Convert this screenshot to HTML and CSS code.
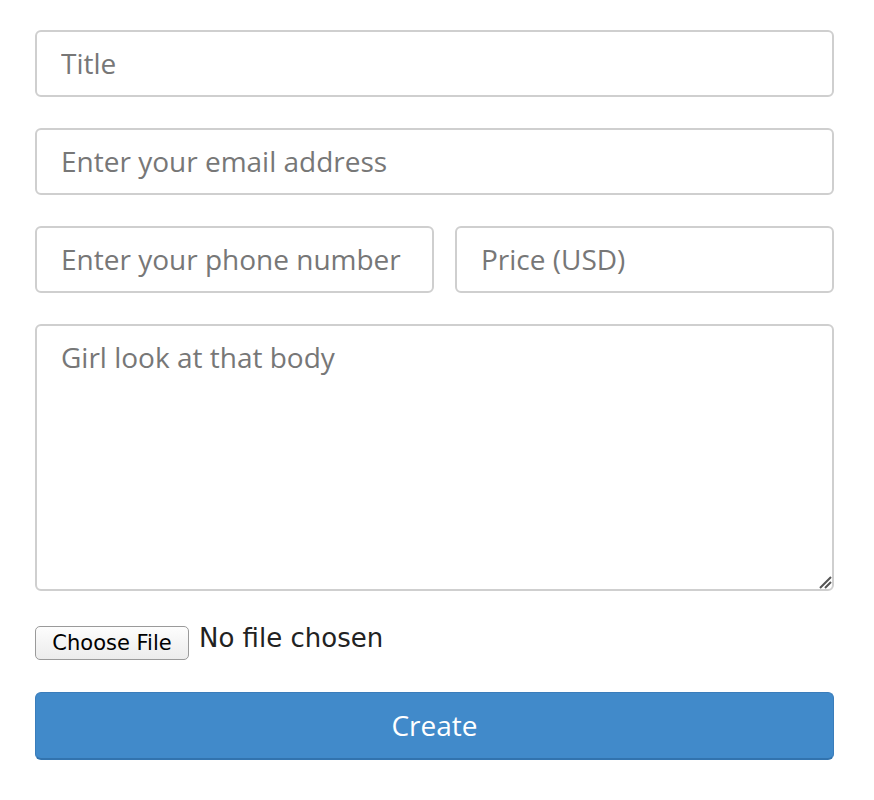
FILE: index.html
```html
<!DOCTYPE html>
<html>
<head>
<meta charset="utf-8">
<link rel="stylesheet" href="styles.css">
</head>
<body>
<form class="form">
  <input class="field" type="text" placeholder="Title">
  <input class="field" type="text" placeholder="Enter your email address">
  <div class="row">
    <input class="field" type="text" placeholder="Enter your phone number">
    <input class="field" type="text" placeholder="Price (USD)">
  </div>
  <textarea class="field area" placeholder="Girl look at that body"></textarea>
  <div class="file">
    <span class="file-btn">Choose File</span>
    <span class="file-label">No file chosen</span>
  </div>
  <button class="create" type="button">Create</button>
</form>
</body>
</html>
```

FILE: styles.css
```css
html, body {
  margin: 0;
  padding: 0;
  background: #fff;
}
.form {
  display: flex;
  flex-direction: column;
  gap: 31px;
  width: 799px;
  padding: 30px 0 0 35px;
  font-family: "Open Sans", sans-serif;
}
.field {
  box-sizing: border-box;
  width: 100%;
  height: 67px;
  margin: 0;
  padding: 0 24px 2px;
  border: 2px solid #cfcfcf;
  border-radius: 6px;
  font-family: "Open Sans", sans-serif;
  font-size: 28px;
  color: #555;
  background: #fff;
  outline: none;
}
.field::placeholder {
  color: #777;
}
.row {
  display: grid;
  grid-template-columns: 399px 1fr;
  gap: 21px;
}
.area {
  height: 267px;
  padding: 12px 24px;
  resize: vertical;
  line-height: 38px;
  display: block;
}
.area::-webkit-resizer {
  background: url("data:image/svg+xml,%3Csvg xmlns='http://www.w3.org/2000/svg' width='15' height='15'%3E%3Cpath d='M3 14L14 3M8 14L14 8' stroke='%23555' stroke-width='2'/%3E%3C/svg%3E") no-repeat right bottom;
}
.file {
  display: flex;
  align-items: flex-start;
  gap: 10px;
  height: 34px;
  margin-top: 4px;
  margin-bottom: 1px;
}
.file-btn {
  box-sizing: border-box;
  width: 154px;
  height: 34px;
  display: flex;
  align-items: center;
  justify-content: center;
  border: 1px solid #9a9a9a;
  border-radius: 5px;
  background: linear-gradient(#fdfdfd, #ececec);
  font-family: "DejaVu Sans", "Liberation Sans", sans-serif;
  font-size: 21px;
  color: #000;
}
.file-label {
  font-family: "DejaVu Sans", "Liberation Sans", sans-serif;
  font-size: 26px;
  line-height: 24px;
  color: #222;
}
.create {
  box-sizing: border-box;
  width: 100%;
  height: 68px;
  border: 1px solid #3a7dbb;
  border-bottom: 2px solid #3273ae;
  border-radius: 6px;
  background: #418aca;
  color: #fff;
  font-family: "Open Sans", sans-serif;
  font-size: 28px;
  padding: 0 0 2px;
}
```
